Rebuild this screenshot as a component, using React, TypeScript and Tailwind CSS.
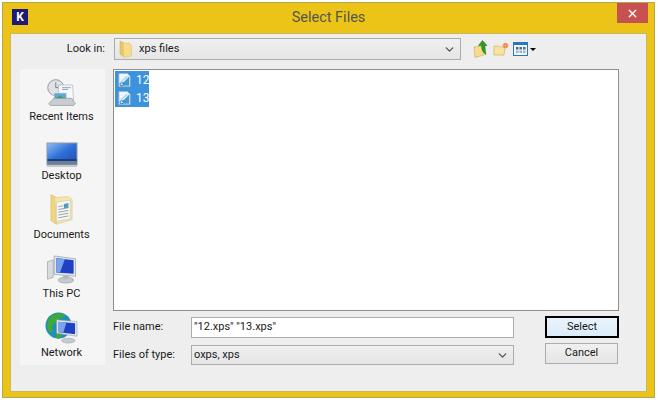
import { ChevronDown, X } from "lucide-react";

function FileIcon() {
  return (
    <svg width="15" height="16" viewBox="0 0 16 16" className="shrink-0">
      <path d="M2 1h9l3 3v11H2z" fill="#eef6fc" stroke="#9db5ca" strokeWidth="0.8" />
      <path d="M3 12c4-1 7-4 10-8v10H3z" fill="#3f9ad0" />
      <path d="M4 10c2-2 4-3 7-6" stroke="#a4d5f0" strokeWidth="1.4" fill="none" />
      <circle cx="5" cy="12.5" r="1.7" fill="#dcecf6" stroke="#1f5f8f" strokeWidth="0.8" />
    </svg>
  );
}

function FileRow({ name }: { name: string }) {
  return (
    <div className="flex h-[18px] w-[34px] items-center gap-[4px] bg-[#3c92dc] pl-[2px] text-[12px] text-white">
      <FileIcon />
      <span>{name}</span>
    </div>
  );
}

function RecentIcon() {
  return (
    <svg width="32" height="30" viewBox="0 0 36 32">
      <circle cx="11" cy="10" r="9" fill="#dfe3e6" stroke="#8b949a" />
      <path d="M11 4v6h5" stroke="#6d757b" strokeWidth="1" fill="none" />
      <path d="M14 7h16l1 17H14z" fill="#f7f8f9" stroke="#a5adb3" strokeWidth="0.7" />
      <path d="M18 10h10M18 12h7" stroke="#7aa0bf" strokeWidth="1" />
      <path d="M9 16h14v8H9z" fill="#5fa9d0" stroke="#d8dde0" strokeWidth="0.8" />
      <path d="M10 23l5-4 7 3v2H10z" fill="#3f9a6f" />
      <path d="M3 28l6-6h20l4 6-2 2H5z" fill="#c9cdd0" stroke="#8b9297" strokeWidth="0.7" />
    </svg>
  );
}

function DesktopIcon() {
  return (
    <svg width="32" height="25" viewBox="0 0 32 25">
      <defs>
        <linearGradient id="desk" x1="0" y1="0" x2="1" y2="1">
          <stop offset="0" stopColor="#8dbcf2" />
          <stop offset="0.5" stopColor="#2f6fd8" />
          <stop offset="1" stopColor="#1e4fb0" />
        </linearGradient>
      </defs>
      <rect x="0.5" y="0.5" width="31" height="23" fill="#8c99a8" />
      <rect x="1.5" y="1.5" width="29" height="19" fill="url(#desk)" />
      <rect x="1.5" y="17" width="29" height="2" fill="#1b3f7c" />
      <rect x="1.5" y="19" width="29" height="3.500" fill="#6d7f96" />
      <rect x="1" y="24" width="30" height="1" fill="#c3c8cd" />
    </svg>
  );
}

function DocumentsIcon() {
  return (
    <svg width="24" height="33" viewBox="0 0 26 34">
      <path d="M1 1l6 3v29l-6-4z" fill="#f2d67c" stroke="#cdb166" strokeWidth="0.6" />
      <path d="M5 4l15-1 4 3v22L7 33z" fill="#f7e5a6" stroke="#d5bf80" strokeWidth="0.5" />
      <path d="M7 9l15-2v20L7 30z" fill="#f5f6f7" stroke="#b5bac0" strokeWidth="0.5" />
      <path d="M15 11l5-1v5l-5 1z" fill="#4f9db8" />
      <path d="M9 14l5-1M9 17l11-2M9 20l11-2M9 23l11-2M9 26l11-2" stroke="#8d939a" strokeWidth="0.9" />
    </svg>
  );
}

function PcIcon() {
  return (
    <svg width="32" height="31" viewBox="0 0 32 32">
      <path d="M1 8l6-2v18l-6 2z" fill="#d9dcde" stroke="#8f9599" strokeWidth="0.6" />
      <path d="M8 2l22 3v18L8 21z" fill="#e4e8ec" stroke="#8e99a6" strokeWidth="0.7" />
      <path d="M10 4l18 2.5v14L10 19z" fill="#1f3fc4" />
      <path d="M10 4l9 1.2-5 14-4-.2z" fill="#7aa4ee" />
      <ellipse cx="20" cy="27" rx="8" ry="3" fill="#c6cbcf" stroke="#8f9599" strokeWidth="0.6" />
      <rect x="17" y="22" width="6" height="4" fill="#b4babf" />
    </svg>
  );
}

function NetworkIcon() {
  return (
    <svg width="33" height="33" viewBox="0 0 34 34">
      <circle cx="14" cy="15" r="13.5" fill="#1f8fb8" />
      <path d="M4 8c4-6 12-7 17-4-2 3-6 2-7 6-1 3-5 1-6 5-1 3 1 6-2 8C2 19 1 13 4 8z" fill="#3fa83f" />
      <path d="M11 22c3-1 6 0 6 3s-3 4-5 3z" fill="#3fa83f" />
      <path d="M12 9l21 2v15l-21-3z" fill="#e6eaee" stroke="#8e99a6" strokeWidth="0.6" />
      <path d="M14 11l17 1.6v11.4l-17-2.2z" fill="#1f3fc4" />
      <path d="M14 11l8 .8-3 10.4-5-.6z" fill="#7aa4ee" />
      <ellipse cx="24" cy="30.5" rx="7" ry="2.500" fill="#c6cbcf" stroke="#8f9599" strokeWidth="0.5" />
    </svg>
  );
}

function FolderIcon() {
  return (
    <svg width="13" height="18" viewBox="0 0 13 18">
      <path d="M1 1l4 2v14l-4-3z" fill="#e9c65e" stroke="#c9aa55" strokeWidth="0.5" />
      <path d="M4 3h6l2.500 2v11l-8 1.500z" fill="#f6dc8a" stroke="#d8bd70" strokeWidth="0.5" />
    </svg>
  );
}

function UpFolderIcon() {
  return (
    <svg width="15" height="18" viewBox="0 0 15 18">
      <path d="M1 7l10-1v9l-9 2.500z" fill="#f6dc8a" stroke="#c9aa55" strokeWidth="0.6" />
      <path d="M9.500 0.500l4.500 5h-2c0 4 .5 6 1 9-2.500-2-4.500-4-4.500-9H5.500z" fill="#2f9a24" stroke="#1c6e16" strokeWidth="0.5" />
    </svg>
  );
}

function NewFolderIcon() {
  return (
    <svg width="16" height="14" viewBox="0 0 16 14">
      <path d="M1 4h5l1 1h5l-1 8H1z" fill="#f8e3a0" stroke="#d0b264" strokeWidth="0.7" />
      <circle cx="12.500" cy="3.500" r="2.500" fill="#ef7a35" />
      <path d="M12.500 0v7M9 3.500h7" stroke="#f6b183" strokeWidth="0.7" />
    </svg>
  );
}

function ViewIcon() {
  return (
    <svg width="15" height="14" viewBox="0 0 15 14">
      <rect x="0.500" y="0.500" width="14" height="13" fill="#f2f6fa" stroke="#2d76bd" />
      <rect x="0.500" y="0.500" width="14" height="2.500" fill="#2d76bd" />
      <path d="M3 5h2.500v2.500H3zM6.500 5h2.500v2.500H6.500zM10 5h2.500v2.500H10z" fill="#4b6f92" />
      <path d="M3 8.500h2.500v2.500H3zM6.500 8.500h2.500v2.500H6.500zM10 8.500h2.500v2.500H10z" fill="#9fb2c4" />
    </svg>
  );
}

function PlaceItem({ icon, label }: { icon: React.ReactNode; label: string }) {
  return (
    <div className="flex h-[59px] shrink-0 flex-col items-center pr-[2px]">
      <div className="flex h-[39px] items-end justify-center">{icon}</div>
      <span className="h-[17px] text-[11px] leading-[17px] text-[#1a1a1a]">{label}</span>
    </div>
  );
}

function Combo({ children, className }: { children: React.ReactNode; className: string }) {
  return (
    <div className={`flex items-center border border-[#acacac] bg-gradient-to-b from-[#f0f0f0] to-[#e5e5e5] ${className}`}>
      <div className="flex min-w-0 flex-1 items-center">{children}</div>
      <ChevronDown size={13} strokeWidth={2.500} className="mr-[4px] text-[#555]" />
    </div>
  );
}

export default function App() {
  return (
    <div
      className="h-[402px] w-[658px] overflow-hidden bg-white pl-[2px] pt-[2px]"
      style={{ fontFamily: "Roboto, sans-serif" }}
    >
      <div className="flex h-[396px] w-[653px] flex-col border border-[#b5a650] bg-[#ecc417] px-[7px] pb-[5px]">
        <div className="flex h-[30px] shrink-0 items-start">
          <div className="ml-[2px] mt-[6px] flex h-[16px] w-[16px] items-center justify-center bg-[#1d1a78] text-[12px] font-bold leading-none text-white">
            K
          </div>
          <div className="mt-[4px] flex-1 pl-[12px] text-center text-[14.500px] leading-[22px] text-[#55554f]">
            Select Files
          </div>
          <div className="-mr-[1px] flex h-[20px] w-[31px] items-center justify-center bg-[#c75050] text-white">
            <X size={13} strokeWidth={2.500} />
          </div>
        </div>

        <div className="flex min-h-0 flex-1 flex-col border border-[#c9b862] bg-[#eeeeee] pl-[9px] pt-[4px]">
          <div className="flex h-[22px] shrink-0 items-center">
            <span className="w-[85px] text-right text-[11px] text-[#1a1a1a]">Look in:</span>
            <Combo className="ml-[9px] h-[22px] w-[347px]">
              <div className="ml-[4px] flex items-center">
                <FolderIcon />
              </div>
              <span className="ml-[7px] text-[11px] text-[#1a1a1a]">xps files</span>
            </Combo>
            <div className="ml-[12px] flex items-center gap-[5px]">
              <UpFolderIcon />
              <NewFolderIcon />
              <div className="ml-[-1px] flex items-center gap-[2px]">
                <ViewIcon />
                <div className="h-0 w-0 border-x-[3px] border-t-[3px] border-x-transparent border-t-black" />
              </div>
            </div>
          </div>

          <div className="mt-[9px] flex">
            <div className="flex h-[296px] w-[85px] shrink-0 flex-col bg-[#f5f5f5]">
              <PlaceItem icon={<RecentIcon />} label="Recent Items" />
              <PlaceItem icon={<DesktopIcon />} label="Desktop" />
              <PlaceItem icon={<DocumentsIcon />} label="Documents" />
              <PlaceItem icon={<PcIcon />} label="This PC" />
              <PlaceItem icon={<NetworkIcon />} label="Network" />
            </div>

            <div className="ml-[8px] w-[506px]">
              <div className="h-[242px] border border-[#8f8f8f] bg-white p-[1px]">
                <FileRow name="12" />
                <FileRow name="13" />
              </div>

              <div className="mt-[6px] flex">
                <div className="w-[401px]">
                  <div className="flex h-[21px] items-center">
                    <span className="w-[78px] text-[11px] text-[#1a1a1a]">File name:</span>
                    <div className="flex h-[21px] w-[323px] items-center border border-[#acacac] bg-white pl-[2px] text-[11px] text-[#1a1a1a]">
                      "12.xps" "13.xps"
                    </div>
                  </div>
                  <div className="mt-[7px] flex h-[20px] items-center">
                    <span className="w-[78px] text-[11px] text-[#1a1a1a]">Files of type:</span>
                    <Combo className="h-[20px] w-[323px]">
                      <span className="pl-[2px] text-[11px] text-[#1a1a1a]">oxps, xps</span>
                    </Combo>
                  </div>
                </div>

                <div className="ml-[31px] flex flex-col">
                  <button className="-mt-[1px] h-[22px] w-[74px] border-2 border-black bg-gradient-to-b from-[#e9f3fc] to-[#dcecfa] text-[11px] text-[#1a1a1a]">
                    Select
                  </button>
                  <button className="mt-[5px] h-[21px] w-[73px] border border-[#acacac] bg-gradient-to-b from-[#f0f0f0] to-[#e5e5e5] text-[11px] text-[#1a1a1a]">
                    Cancel
                  </button>
                </div>
              </div>
            </div>
          </div>
        </div>
      </div>
    </div>
  );
}
